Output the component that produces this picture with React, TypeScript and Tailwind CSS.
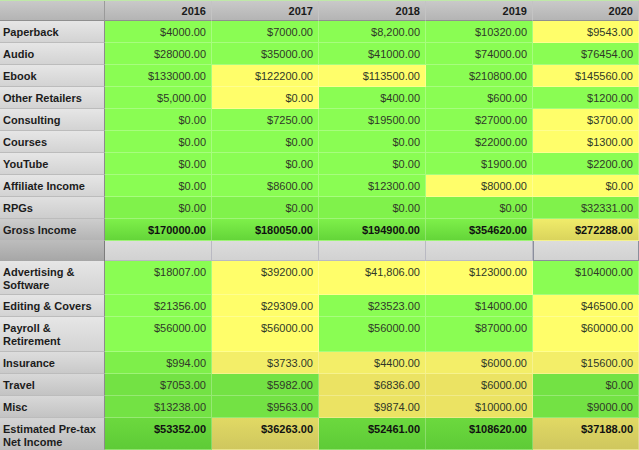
import { FC } from "react";

type Tone = "a" | "b" | "gross" | "c" | "d" | "e";

type Row = {
  label: string;
  values: string[];
  colors: string; // g = green, y = yellow
  tone: Tone;
  h: string;
  bold?: boolean;
};

const rows: Row[] = [
  { label: "Paperback", values: ["$4000.00", "$7000.00", "$8,200.00", "$10320.00", "$9543.00"], colors: "ggggy", tone: "a", h: "h-[22px]" },
  { label: "Audio", values: ["$28000.00", "$35000.00", "$41000.00", "$74000.00", "$76454.00"], colors: "ggggg", tone: "a", h: "h-[22px]" },
  { label: "Ebook", values: ["$133000.00", "$122200.00", "$113500.00", "$210800.00", "$145560.00"], colors: "gyygy", tone: "a", h: "h-[22px]" },
  { label: "Other Retailers", values: ["$5,000.00", "$0.00", "$400.00", "$600.00", "$1200.00"], colors: "gyggg", tone: "a", h: "h-[22px]" },
  { label: "Consulting", values: ["$0.00", "$7250.00", "$19500.00", "$27000.00", "$3700.00"], colors: "ggggy", tone: "a", h: "h-[22px]" },
  { label: "Courses", values: ["$0.00", "$0.00", "$0.00", "$22000.00", "$1300.00"], colors: "ggggy", tone: "a", h: "h-[22px]" },
  { label: "YouTube", values: ["$0.00", "$0.00", "$0.00", "$1900.00", "$2200.00"], colors: "ggggg", tone: "a", h: "h-[22px]" },
  { label: "Affiliate Income", values: ["$0.00", "$8600.00", "$12300.00", "$8000.00", "$0.00"], colors: "gggyy", tone: "a", h: "h-[22px]" },
  { label: "RPGs", values: ["$0.00", "$0.00", "$0.00", "$0.00", "$32331.00"], colors: "ggggg", tone: "b", h: "h-[22px]" },
  { label: "Gross Income", values: ["$170000.00", "$180050.00", "$194900.00", "$354620.00", "$272288.00"], colors: "ggggy", tone: "gross", h: "h-[22px]", bold: true },
];

const expenses: Row[] = [
  { label: "Advertising & Software", values: ["$18007.00", "$39200.00", "$41,806.00", "$123000.00", "$104000.00"], colors: "gyyyg", tone: "a", h: "h-[34px]" },
  { label: "Editing & Covers", values: ["$21356.00", "$29309.00", "$23523.00", "$14000.00", "$46500.00"], colors: "gyggy", tone: "a", h: "h-[22px]" },
  { label: "Payroll & Retirement", values: ["$56000.00", "$56000.00", "$56000.00", "$87000.00", "$60000.00"], colors: "gyggy", tone: "a", h: "h-[35px]" },
  { label: "Insurance", values: ["$994.00", "$3733.00", "$4400.00", "$6000.00", "$15600.00"], colors: "gyyyy", tone: "c", h: "h-[22px]" },
  { label: "Travel", values: ["$7053.00", "$5982.00", "$6836.00", "$6000.00", "$0.00"], colors: "ggyyg", tone: "d", h: "h-[22px]" },
  { label: "Misc", values: ["$13238.00", "$9563.00", "$9874.00", "$10000.00", "$9000.00"], colors: "ggyyg", tone: "d", h: "h-[22px]" },
  { label: "Estimated Pre-tax Net Income", values: ["$53352.00", "$36263.00", "$52461.00", "$108620.00", "$37188.00"], colors: "gyggy", tone: "e", h: "h-[32px]", bold: true },
];

const fills: Record<Tone, { g: string; y: string; label: string }> = {
  a: { g: "bg-[#8afd53]", y: "bg-[#fffe6a]", label: "bg-linear-to-b from-[#e6e6e6] to-[#d3d3d3]" },
  b: { g: "bg-[#80f24b]", y: "bg-[#fcfa68]", label: "bg-linear-to-b from-[#e0e0e0] to-[#cdcdcd]" },
  gross: { g: "bg-linear-to-b from-[#7ef04a] to-[#64d539]", y: "bg-linear-to-b from-[#f0ec6a] to-[#dad45c]", label: "bg-linear-to-b from-[#cdcdcd] to-[#b4b4b4]" },
  c: { g: "bg-[#7eef4a]", y: "bg-[#f3ee68]", label: "bg-linear-to-b from-[#dddddd] to-[#c9c9c9]" },
  d: { g: "bg-[#73e244]", y: "bg-[#ebe363]", label: "bg-linear-to-b from-[#d8d8d8] to-[#c3c3c3]" },
  e: { g: "bg-linear-to-b from-[#6cd93e] to-[#5ecb37]", y: "bg-linear-to-b from-[#e1d964] to-[#cfc75e]", label: "bg-linear-to-b from-[#d4d4d4] to-[#bdbdbd]" },
};

const years = ["2016", "2017", "2018", "2019", "2020"];
const widths = ["w-[107px]", "w-[107px]", "w-[107px]", "w-[107px]", "w-[106px]"];

const DataRow: FC<{ row: Row }> = ({ row }) => {
  const f = fills[row.tone];
  return (
    <div className={`flex ${row.h}`}>
      <div className={`w-[105px] shrink-0 border-r border-r-[#8c8c8c] border-b border-b-[#bcbcbc] pl-[3px] pr-1 pt-[5px] leading-[13px] font-bold text-[#1c1c1c] ${f.label}`}>
        {row.label}
      </div>
      {row.values.map((v, i) => (
        <div
          key={i}
          className={`${widths[i]} shrink-0 border-r border-b border-white/25 pr-[5px] pt-[5px] leading-[13px] text-right ${
            row.colors[i] === "g" ? f.g : f.y
          } ${row.bold ? "font-bold text-[#111]" : "text-[#303828]"}`}
        >
          {v}
        </div>
      ))}
    </div>
  );
};

const App: FC = () => {
  return (
    <div className="w-[639px] h-[450px] overflow-hidden bg-[#d8d8d8] text-[11px] font-['Liberation_Sans',Arial,sans-serif]">
      <div className="flex h-[21px] bg-linear-to-b from-[#c9c9c9] to-[#b3b3b3] border-t border-t-[#bfe8a8]">
        <div className="w-[105px] shrink-0 border-r border-r-[#9a9a9a] border-b border-b-[#8f8f8f]" />
        {years.map((y, i) => (
          <div
            key={y}
            className={`${widths[i]} shrink-0 border-r border-r-[#c4c4c4] border-b border-b-[#8f8f8f] pr-[5px] pt-[4px] leading-[13px] text-right font-bold text-[#1a1a1a]`}
          >
            {y}
          </div>
        ))}
      </div>

      {rows.map((r) => (
        <DataRow key={r.label} row={r} />
      ))}

      <div className="flex h-[20px]">
        <div className="w-[105px] shrink-0 border-r border-r-[#7c7c7c] bg-linear-to-b from-[#bcbcbc] to-[#a6a6a6]" />
        {widths.map((w, i) => (
          <div
            key={i}
            className={`${w} shrink-0 border-b border-r bg-linear-to-b from-[#dcdcdc] to-[#d2d2d2] ${
              i === 4 ? "border-[#8a8e9c] border-l" : "border-[#b9b9c2]"
            }`}
          />
        ))}
      </div>

      {expenses.map((r) => (
        <DataRow key={r.label} row={r} />
      ))}
    </div>
  );
};

export default App;
